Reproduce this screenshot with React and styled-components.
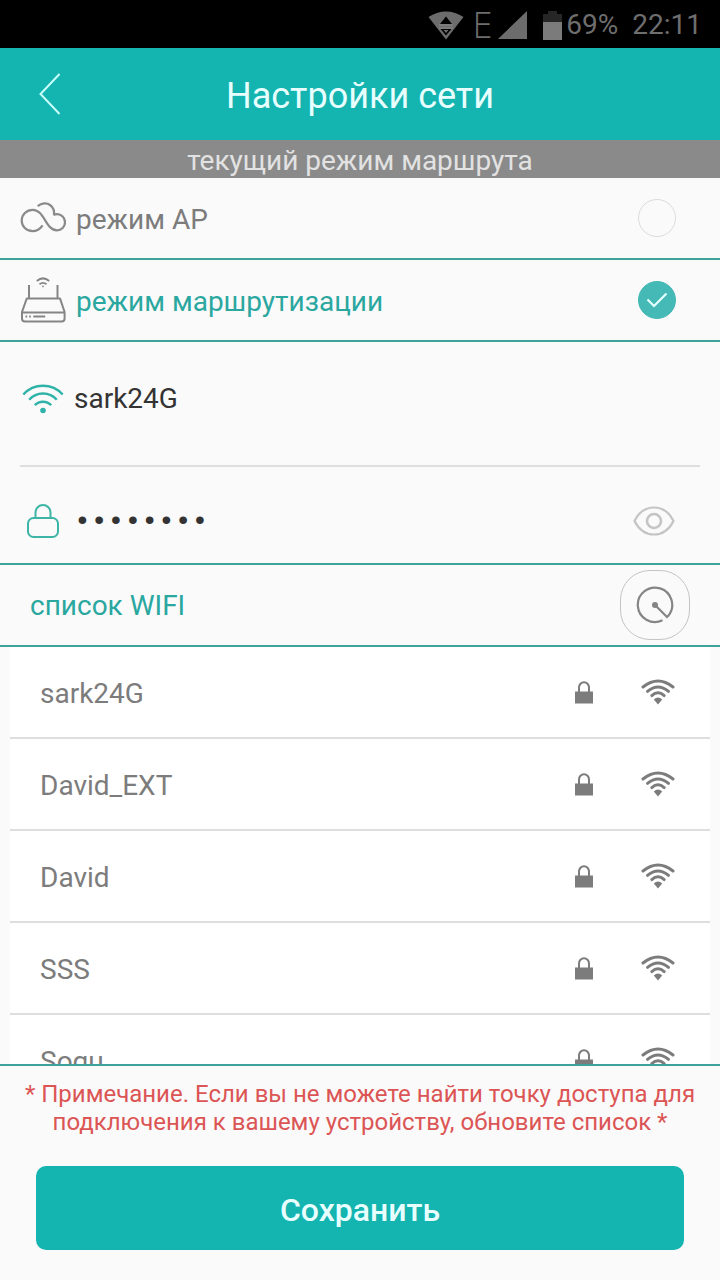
import React, { useState } from "react";
import styled, { createGlobalStyle } from "styled-components";

const networks = ["sark24G", "David_EXT", "David", "SSS", "Sogu"];

const App = () => {
    const [mode, setMode] = useState("router");
    const [ssid, setSsid] = useState("sark24G");
    const [password, setPassword] = useState("12345678");
    const [visible, setVisible] = useState(false);

    const onSubmit = (e) => {
        e.preventDefault();
    };

    return (
        <>
            <GlobalStyle />
            <Screen onSubmit={onSubmit}>
                <StatusBar>
                    <StatusWifiIcon />
                    <NetworkType>E</NetworkType>
                    <SignalIcon />
                    <Battery>
                        <BatteryIcon />
                        69%
                    </Battery>
                    <Clock>22:11</Clock>
                </StatusBar>
                <Header>
                    <BackButton type="button" aria-label="Назад">
                        <BackIcon />
                    </BackButton>
                    <Title>Настройки сети</Title>
                </Header>
                <ModeCaption>текущий режим маршрута</ModeCaption>

                <ModeRow>
                    <IconSlot><CloudIcon /></IconSlot>
                    <RowLabel htmlFor="mode-ap" $active={mode === "ap"}>режим AP</RowLabel>
                    <ModeRadio id="mode-ap" checked={mode === "ap"} onChange={() => setMode("ap")} />
                </ModeRow>
                <ModeRow>
                    <IconSlot><RouterIcon /></IconSlot>
                    <RowLabel htmlFor="mode-router" $active={mode === "router"}>режим маршрутизации</RowLabel>
                    <ModeRadio id="mode-router" checked={mode === "router"} onChange={() => setMode("router")} />
                </ModeRow>

                <SsidRow>
                    <IconSlot><WifiIcon /></IconSlot>
                    <Field
                        type="text"
                        aria-label="Имя сети"
                        value={ssid}
                        onChange={(e) => setSsid(e.target.value)}
                    />
                </SsidRow>
                <PasswordRow>
                    <IconSlot><LockIcon /></IconSlot>
                    <Field
                        type={visible ? "text" : "password"}
                        aria-label="Пароль"
                        value={password}
                        onChange={(e) => setPassword(e.target.value)}
                    />
                    <EyeButton type="button" aria-label="Показать пароль" onClick={() => setVisible(!visible)}>
                        <EyeIcon />
                    </EyeButton>
                </PasswordRow>

                <ListHeader>
                    <ListTitle>список WIFI</ListTitle>
                    <RefreshButton type="button" aria-label="Обновить список">
                        <RadarIcon />
                    </RefreshButton>
                </ListHeader>
                <NetworkList>
                    {networks.map((name) => {
                        return (
                            <li key={name}>
                                <NetworkButton type="button" onClick={() => setSsid(name)}>
                                    <NetworkName>{name}</NetworkName>
                                    <SmallLockIcon />
                                    <StrengthIcon />
                                </NetworkButton>
                            </li>
                        );
                    })}
                </NetworkList>

                <Footer>
                    <Note>
                        * Примечание. Если вы не можете найти точку доступа для подключения к вашему устройству, обновите список *
                    </Note>
                    <SaveButton type="submit">Сохранить</SaveButton>
                </Footer>
            </Screen>
        </>
    );
};

export default App;

const ModeRadio = ({ id, checked, onChange }) => (
    <RadioBox>
        <Radio type="radio" name="mode" id={id} checked={checked} onChange={onChange} />
        {checked && (
            <CheckMark width="22" height="16" viewBox="0 0 22 16">
                <path d="M1.5 7.5 L8 14 L20.5 1.5" fill="none" stroke="#e8ffff" strokeWidth="2.2" />
            </CheckMark>
        )}
    </RadioBox>
);

const StatusWifiIcon = () => (
    <svg width="36" height="29" viewBox="0 0 36 29">
        <path d="M0.5 6 C11 -1.5 25 -1.5 35.5 6 L18 28.5 Z" fill="#6c6c6c" />
        <path d="M18 5.5 L24 13 H12 Z M12.5 18 H23.5 L18 24.5 Z" fill="#000" />
        <path d="M11 14 H25 M11 17 H25" stroke="#8a8a8a" strokeWidth="1" />
        <path d="M15.5 19 H20.5 L18 22 Z" fill="#6c6c6c" />
    </svg>
);

const SignalIcon = () => (
    <svg width="29" height="29" viewBox="0 0 29 29">
        <path d="M29 0 V28 H0 Z" fill="#6c6c6c" />
    </svg>
);

const BatteryIcon = () => (
    <svg width="19" height="29" viewBox="0 0 19 29">
        <path d="M5 0 H14 V3 H19 V11 H0 V3 H5 Z" fill="#262626" />
        <path d="M0 11 H19 V29 H0 Z" fill="#7b7b7b" />
    </svg>
);

const BackIcon = () => (
    <svg width="22" height="42" viewBox="0 0 22 42">
        <path d="M20.5 1 L1.5 21 L20.5 41" fill="none" stroke="#c9fffb" strokeWidth="2" />
    </svg>
);

const CloudIcon = () => (
    <svg width="46" height="32" viewBox="0 0 46 32" fill="none" stroke="#8a8a8a" strokeWidth="2.2">
        <path d="M22.6 23.3 C19.8 27.4 16.2 29.2 12.5 29.2 C6.3 29.2 1.7 24.4 1.7 18.5 C1.7 12.6 6.5 7.8 12.8 7.8 C24.5 7.8 25.5 28.3 37 28.3 C41.5 28.3 45 24.8 45 20.2 C45 15.6 41.4 12.2 37.2 12.2 C35.8 12.2 34.6 12.5 33.4 13.1" />
        <path d="M17.7 4.2 C21.6 0.9 26.8 0.6 30 3 C33.2 5.4 34.6 9 33.9 12.8" />
    </svg>
);

const RouterIcon = () => (
    <svg width="46" height="46" viewBox="0 0 46 46" fill="none" stroke="#858585" strokeWidth="2">
        <path d="M9 8 V21 M37.5 8 V21" />
        <path d="M6.8 21.4 H40 L44.6 35 V41.5 Q44.6 44.4 41.7 44.4 H4.9 Q2 44.4 2 41.5 V35 Z" strokeLinejoin="round" />
        <path d="M2 35.4 H44.6" />
        <path d="M16.8 3.9 Q23 -1.2 29.2 3.9" />
        <path d="M19.5 7.3 Q23 4.6 26.5 7.3" strokeWidth="1.8" />
        <path d="M21.6 8.8 H24.4 L23 10.6 Z" fill="#858585" stroke="none" />
        <path d="M5.5 39.6 H7.2 M9.2 39.6 H10.9 M13.3 39.6 H25.2" />
    </svg>
);

const WifiIcon = () => (
    <svg width="42" height="32" viewBox="0 0 42 32" fill="none" stroke="#2fb3a9" strokeWidth="2.4">
        <path d="M1.3 12.5 A26.5 26.5 0 0 1 40.7 12.5" />
        <path d="M7.2 17.8 A18.4 18.4 0 0 1 34.8 17.8" />
        <path d="M12.8 23.2 A11.4 11.4 0 0 1 29.2 23.2" />
        <circle cx="21" cy="28.5" r="2.8" fill="#2fb3a9" stroke="none" />
    </svg>
);

const LockIcon = () => (
    <svg width="32" height="34" viewBox="0 0 32 34" fill="none" stroke="#3db5a6" strokeWidth="2">
        <rect x="1" y="14" width="30" height="19" rx="5.5" />
        <path d="M8.5 14 V8.5 A7.5 7.5 0 0 1 23.5 8.5 V14" />
    </svg>
);

const EyeIcon = () => (
    <svg width="42" height="30" viewBox="0 0 42 30" fill="none" stroke="#c4c4c4" strokeWidth="2.2">
        <path d="M1.5 15 C6 6 13 1.5 21 1.5 C29 1.5 36 6 40.5 15 C36 24 29 28.5 21 28.5 C13 28.5 6 24 1.5 15 Z" />
        <circle cx="21" cy="15" r="7" strokeWidth="2.6" />
    </svg>
);

const RadarIcon = () => (
    <svg width="38" height="38" viewBox="0 0 38 38" fill="none" stroke="#858585" strokeWidth="2.2">
        <path d="M26.5 34.3 A17.2 17.2 0 1 1 32.4 29.6 L31 31 L19 19" />
        <circle cx="19" cy="19" r="3" fill="#858585" stroke="none" />
    </svg>
);

const SmallLockIcon = () => (
    <svg width="18" height="23" viewBox="0 0 18 23">
        <rect x="0" y="10.5" width="18" height="12" fill="#7c7c7c" />
        <path d="M4 11 V6.5 A5 5.3 0 0 1 14 6.5 V11" fill="none" stroke="#7c7c7c" strokeWidth="2" />
    </svg>
);

const StrengthIcon = () => (
    <svg width="34" height="26" viewBox="0 0 34 26" fill="none" stroke="#7c7c7c" strokeWidth="3" strokeLinecap="round">
        <path d="M2 8 Q17 -4 32 8" />
        <path d="M6.5 12.4 Q17 3.6 27.5 12.4" />
        <path d="M10.8 16.6 Q17 11 23.2 16.6" />
        <path d="M12.8 20.6 Q17 16.6 21.2 20.6 L17 25.5 Z" fill="#7c7c7c" stroke="none" />
    </svg>
);

const GlobalStyle = createGlobalStyle`
    * {
        box-sizing: border-box;
    }

    body {
        margin: 0;
        background-color: #fafafa;
        font-family: Roboto, "Noto Sans", sans-serif;
    }

    button, input {
        font-family: inherit;
    }

    svg {
        display: block;
        flex-shrink: 0;
    }
`;

const Screen = styled.form`
    height: 100vh;
    display: flex;
    flex-direction: column;
    background-color: #fafafa;
`;

const StatusBar = styled.div`
    height: 48px;
    flex-shrink: 0;
    padding: 2px 18px 0 0;
    display: flex;
    justify-content: flex-end;
    align-items: center;
    background-color: #000;
    color: #6e6e6e;
    font-size: 28px;
    line-height: 32px;
`;

const NetworkType = styled.span`
    margin: 0 6px 0 8px;
    font-family: "Open Sans", sans-serif;
    font-size: 36px;
    font-weight: 300;
`;

const Battery = styled.span`
    margin-left: 16px;
    display: flex;
    align-items: center;
    gap: 4px;
`;

const Clock = styled.span`
    margin-left: 14px;
`;

const Header = styled.header`
    height: 92px;
    flex-shrink: 0;
    display: grid;
    grid-template-columns: 100px 1fr 100px;
    align-items: center;
    background-color: #14b4b0;
`;

const BackButton = styled.button`
    height: 92px;
    display: flex;
    justify-content: center;
    align-items: center;
    border: none;
    background: none;
    cursor: pointer;
`;

const Title = styled.h1`
    margin: 0;
    padding-top: 4px;
    text-align: center;
    font-size: 36px;
    line-height: 44px;
    font-weight: 400;
    color: #e8ffff;
`;

const ModeCaption = styled.h2`
    margin: 0;
    padding: 5px 0 1px;
    flex-shrink: 0;
    text-align: center;
    font-size: 28px;
    line-height: 32px;
    font-weight: 400;
    color: #e2e2e2;
    background-color: #8a8a8a;
`;

const Row = styled.div`
    height: 82px;
    flex-shrink: 0;
    padding: 0 44px 0 20px;
    display: flex;
    align-items: center;
    gap: 8px;
    border-bottom: 2px solid #3da39b;
`;

const ModeRow = styled(Row)`
    gap: 10px;
`;

const SsidRow = styled(Row)`
    height: 125px;
    margin: 0 20px;
    padding: 0 0 12px;
    border-bottom-color: #dedede;
`;

const PasswordRow = styled(Row)`
    height: 98px;
    padding-top: 12px;
    padding-right: 45px;
`;

const IconSlot = styled.span`
    width: 46px;
    flex-shrink: 0;
    display: flex;
    justify-content: center;
`;

const RowLabel = styled.label`
    flex: 1;
    padding-top: 4px;
    font-size: 28px;
    line-height: 32px;
    color: ${(props) => (props.$active ? "#2aa79f" : "#7c7c7c")};
`;

const RadioBox = styled.span`
    display: grid;
    place-items: center;

    > * {
        grid-area: 1 / 1;
    }
`;

const Radio = styled.input`
    appearance: none;
    width: 38px;
    height: 38px;
    margin: 0;
    border: 1px solid #dcdcdc;
    border-radius: 50%;

    &:checked {
        border-color: #45b9b5;
        background-color: #45b9b5;
    }
`;

const CheckMark = styled.svg`
    pointer-events: none;
`;

const Field = styled.input`
    flex: 1;
    min-width: 0;
    padding: 2px 0 0;
    border: none;
    outline: none;
    background: none;
    font-size: 28px;
    line-height: 32px;
    color: #333;

    &[type="password"] {
        font-family: "Liberation Mono", monospace;
    }
`;

const EyeButton = styled.button`
    padding: 0;
    border: none;
    background: none;
    cursor: pointer;
`;

const ListHeader = styled(Row)`
    padding: 0 30px;
`;

const ListTitle = styled.h2`
    flex: 1;
    margin: 0;
    padding-top: 2px;
    font-size: 28px;
    line-height: 32px;
    font-weight: 400;
    color: #2aa79f;
`;

const RefreshButton = styled.button`
    width: 70px;
    height: 70px;
    padding: 0;
    display: flex;
    justify-content: center;
    align-items: center;
    border: 1px solid #c4c4c4;
    border-radius: 30px;
    background: none;
    cursor: pointer;
`;

const NetworkList = styled.ul`
    flex: 1;
    min-height: 0;
    margin: 0 10px;
    padding: 0;
    overflow-y: auto;
    scrollbar-width: none;
    list-style: none;
    background-color: #fff;
`;

const NetworkButton = styled.button`
    width: 100%;
    height: 92px;
    padding: 0 35px 0 30px;
    display: flex;
    align-items: center;
    gap: 48px;
    border: none;
    border-bottom: 2px solid #dedede;
    background: none;
    cursor: pointer;
`;

const NetworkName = styled.span`
    flex: 1;
    padding-top: 3px;
    text-align: left;
    font-size: 28px;
    line-height: 32px;
    color: #7c7c7c;
`;

const Footer = styled.footer`
    flex-shrink: 0;
    padding: 14px 20px 30px;
    border-top: 2px solid #3da39b;
`;

const Note = styled.p`
    margin: 0;
    text-align: center;
    font-size: 24px;
    line-height: 28px;
    color: #dc5555;
`;

const SaveButton = styled.button`
    display: block;
    width: calc(100% - 32px);
    height: 84px;
    margin: 30px auto 0;
    padding: 4px 0 0;
    border: none;
    border-radius: 10px;
    background-color: #14b4b0;
    font-size: 32px;
    font-weight: 500;
    color: #e8ffff;
    cursor: pointer;
`;
